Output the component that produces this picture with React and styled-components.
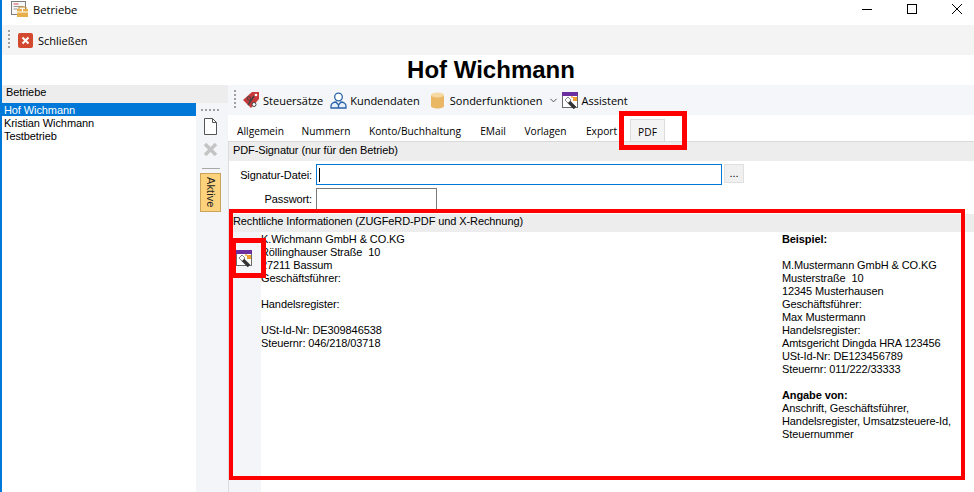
import React from 'react'
import styled, { createGlobalStyle } from 'styled-components'
import { ChevronDown } from 'lucide-react'

const GlobalStyle = createGlobalStyle`
  html, body { margin: 0; padding: 0; background: #fff; }
  * { box-sizing: border-box; }
`

const Window = styled.div`
  position: relative;
  width: 974px;
  height: 492px;
  overflow: hidden;
  background: #fff;
  border-left: 2px solid #0078d7;
  font-family: "Liberation Sans", Arial, sans-serif;
  font-size: 11px;
  letter-spacing: -0.1px;
  color: #000;
  display: flex;
  flex-direction: column;
`
const TitleBar = styled.div`
  height: 25px;
  display: flex;
  align-items: center;
  padding: 0 0 7px 8px;
  gap: 4px;
  font-family: "Open Sans", sans-serif;
  font-size: 11.2px;
  letter-spacing: 0;
`
const WindowButtons = styled.div`
  margin-left: auto;
  display: flex;
  align-items: center;
  gap: 35px;
  padding-right: 12px;
`
const Toolbar = styled.div`
  height: 30px;
  flex: none;
  display: flex;
  align-items: center;
  background: ${p => p.$tint || '#f4f4f4'};
  padding-left: 6px;
  font-family: "Open Sans", sans-serif;
  font-size: 11px;
  letter-spacing: 0;
`
const Grip = styled.span`
  width: 2px;
  height: 20px;
  margin-right: ${p => p.$after || 8}px;
  background: repeating-linear-gradient(to bottom, #a0a0a0 0 2px, transparent 2px 4px);
`
const ToolItem = styled.span`
  display: inline-flex;
  align-items: center;
  gap: ${p => p.$gap || 3}px;
  margin-right: ${p => p.$after || 4}px;
  white-space: nowrap;
`
const Heading = styled.h1`
  margin: 0;
  padding-left: 6px;
  height: 30px;
  flex: none;
  text-align: center;
  font-size: 24px;
  line-height: 30px;
  letter-spacing: 0;
  font-weight: 700;
`
const Body = styled.div`
  flex: 1;
  min-height: 0;
  display: flex;
`
const LeftPane = styled.div`
  width: 226px;
  flex: none;
  display: flex;
  flex-direction: column;
`
const PaneHeader = styled.div`
  height: 18px;
  flex: none;
  background: #ededed;
  padding-left: 4px;
  line-height: 15px;
`
const LeftBody = styled.div`
  flex: 1;
  display: flex;
`
const List = styled.ul`
  width: 194px;
  margin: 0;
  padding: 0;
  list-style: none;
`
const ListItem = styled.li`
  height: 13px;
  line-height: 14px;
  padding-left: 2px;
  background: ${p => (p.$selected ? '#0078d7' : 'transparent')};
  color: ${p => (p.$selected ? '#fff' : '#000')};
`
const Rail = styled.div`
  flex: 1;
  background: #f3f5f8;
  display: flex;
  flex-direction: column;
  align-items: center;
  padding: 6px 3px 0 0;
`
const RailDots = styled.span`
  width: 19px;
  height: 2px;
  background: repeating-linear-gradient(to right, #a0a0a0 0 2px, transparent 2px 4px);
  margin-bottom: 7px;
`
const RailSpacer = styled.span`
  height: 7px;
`
const RailRule = styled.span`
  width: 18px;
  height: 1px;
  background: #a8a8a8;
  margin: 11px 0 4px;
`
const AktiveButton = styled.div`
  width: 21px;
  height: 39px;
  background: #fdd27c;
  border: 1px solid #c9a35a;
  writing-mode: vertical-rl;
  display: flex;
  align-items: center;
  justify-content: center;
  letter-spacing: 0.1px;
  color: #222;
`
const Content = styled.div`
  flex: 1;
  min-width: 0;
  display: flex;
  flex-direction: column;
`
const Tabs = styled.div`
  height: 27px;
  flex: none;
  display: flex;
  align-items: flex-end;
  border-bottom: 1px solid #d9d9d9;
  font-family: "Open Sans", sans-serif;
  font-size: 10.2px;
  letter-spacing: 0;
`
const Tab = styled.div`
  flex: none;
  height: ${p => (p.$active ? 22 : 20)}px;
  line-height: ${p => (p.$active ? 24 : 21)}px;
  margin-left: ${p => (p.$active ? 3 : 0)}px;
  width: ${p => p.$w}px;
  text-align: center;
  background: ${p => (p.$active ? '#f4f4f4' : 'transparent')};
  border: ${p => (p.$active ? '1px solid #dcdcdc' : 'none')};
  border-bottom: none;
`
const FormArea = styled.div`
  flex: 1;
  min-height: 0;
  border-left: 1px solid #dcdcdc;
  display: flex;
  flex-direction: column;
`
const SectionHeader = styled.div`
  height: ${p => p.$h}px;
  flex: none;
  background: #ededed;
  padding-left: 4px;
  line-height: ${p => p.$h - 3}px;
`
const SignatureForm = styled.div`
  height: 53px;
  flex: none;
  padding-top: 3px;
  display: grid;
  grid-template-columns: 87px 406px 22px;
  grid-auto-rows: 24px;
  align-items: start;
`
const FieldLabel = styled.label`
  text-align: right;
  padding-right: 4px;
  line-height: 22px;
`
const PasswordLabel = styled(FieldLabel)`
  line-height: 23px;
`
const TextInput = styled.div`
  height: ${p => p.$h}px;
  width: ${p => p.$w}px;
  border: 1px solid ${p => (p.$focus ? '#0078d7' : '#7a7a7a')};
  display: flex;
  align-items: center;
  padding-left: 2px;
`
const Caret = styled.span`
  width: 1px;
  height: 14px;
  background: #000;
`
const BrowseButton = styled.div`
  width: 20px;
  height: 19px;
  margin-left: 2px;
  background: #f0f0f0;
  border: 1px solid #e0e0e0;
  text-align: center;
  line-height: 17px;
`
const LegalBody = styled.div`
  flex: 1;
  min-height: 0;
  display: flex;
`
const Gutter = styled.div`
  width: 32px;
  flex: none;
  background: #f3f5f8;
  padding: 18px 0 0 7px;
`
const AddressText = styled.div`
  width: 521px;
  flex: none;
  padding-top: 1px;
  line-height: 13px;
  white-space: pre;
`
const ExampleText = styled.div`
  padding-top: 1px;
  line-height: 13px;
  white-space: pre;
`
const Strong = styled.b`
  font-weight: 700;
`
const RedFrame = styled.div`
  position: absolute;
  left: ${p => p.$x}px;
  top: ${p => p.$y}px;
  width: ${p => p.$w}px;
  height: ${p => p.$h}px;
  border: ${p => p.$b || 5}px solid #ff0000;
  pointer-events: none;
`

const AppIcon = () => (
  <svg width="19" height="18" viewBox="0 0 19 18">
    <rect x="1.500" y="1.500" width="14" height="13" fill="#f7f7f7" stroke="#7d7d7d" />
    <path d="M3.500 4h5" stroke="#d9534f" />
    <path d="M3.500 6.500h10M3.500 9h4" stroke="#9a9a9a" />
    <rect x="7" y="9" width="11" height="8" fill="#e8b04d" />
    <path d="M7 12h11M12.500 9v3" stroke="#fff" />
    <path d="M9 9V7h7v2" fill="none" stroke="#c98f30" />
  </svg>
)
const CloseIcon = () => (
  <svg width="15" height="15" viewBox="0 0 15 15">
    <rect width="15" height="15" rx="2" fill="#d3492f" />
    <path d="M4.500 4.500l6 6M10.500 4.500l-6 6" stroke="#fff" strokeWidth="2" />
  </svg>
)
const TagIcon = () => (
  <svg width="18" height="18" viewBox="0 0 18 18">
    <path d="M10 1h7v7l-8 9-8-8z" fill="#c63a3a" />
    <circle cx="14" cy="4" r="1.300" fill="#fff" />
    <circle cx="7" cy="7.500" r="1.800" fill="none" stroke="#444" />
    <circle cx="12" cy="13.500" r="2" fill="#fff" stroke="#444" />
    <path d="M6 14l6-9" stroke="#444" strokeWidth="1.400" />
  </svg>
)
const UserIcon = () => (
  <svg width="17" height="17" viewBox="0 0 17 17" fill="none" stroke="#2a62a8" strokeWidth="1.300">
    <circle cx="8.500" cy="5" r="3.800" fill="#fff" />
    <path d="M1 16v-2c0-2.500 3-4 5-4l2.500 3 2.500-3c2 0 5 1.500 5 4v2z" fill="#e6effa" />
    <path d="M8.500 13v3" />
  </svg>
)
const DbIcon = () => (
  <svg width="15" height="17" viewBox="0 0 15 17">
    <path d="M1 3v11c0 1.500 3 2.500 6.500 2.500S14 15.500 14 14V3z" fill="#eab765" />
    <ellipse cx="7.500" cy="3" rx="6.500" ry="2.500" fill="#f6d9a2" />
  </svg>
)
const WandIcon = () => (
  <svg width="17" height="17" viewBox="0 0 17 17">
    <rect x="0.500" y="0.500" width="15" height="15" fill="#fff" stroke="#6a6a6a" />
    <rect x="0" y="0" width="16" height="4" fill="#6b2fa0" />
    <path d="M6 9l7 7" stroke="#333" strokeWidth="3.500" />
    <path d="M3 8l3-3 3 3-3 3z" fill="#fff" stroke="#888" />
    <rect x="11" y="5" width="4" height="4" fill="#f0a030" />
    <rect x="9" y="4" width="2" height="2" fill="#f7c070" />
  </svg>
)
const DocIcon = () => (
  <svg width="13" height="17" viewBox="0 0 13 17" fill="#fff" stroke="#555">
    <path d="M0.500 0.500h8l4 4v12h-12z" />
    <path d="M8.500 0.500v4h4" fill="none" />
  </svg>
)
const DisabledX = () => (
  <svg width="15" height="15" viewBox="0 0 15 15">
    <path d="M2 2l11 11M13 2L2 13" stroke="#c4c4c4" strokeWidth="3.500" />
  </svg>
)

const addressLines = `K.Wichmann GmbH & CO.KG
Röllinghauser Straße  10
27211 Bassum
Geschäftsführer:

Handelsregister:

USt-Id-Nr: DE309846538
Steuernr: 046/218/03718`

const exampleLines = `M.Mustermann GmbH & CO.KG
Musterstraße  10
12345 Musterhausen
Geschäftsführer:
Max Mustermann
Handelsregister:
Amtsgericht Dingda HRA 123456
USt-Id-Nr: DE123456789
Steuernr: 011/222/33333`

const tabs = [
  ['Allgemein', 65], ['Nummern', 66], ['Konto/Buchhaltung', 112], ['EMail', 44],
  ['Vorlagen', 61], ['Export', 51],
]

export default function App() {
  return (
    <Window>
      <GlobalStyle />
      <TitleBar>
        <AppIcon />
        Betriebe
        <WindowButtons>
          <svg width="10" height="10" viewBox="0 0 10 10"><path d="M0 5.500h10" stroke="#000" /></svg>
          <svg width="10" height="10" viewBox="0 0 10 10"><rect x=".5" y=".5" width="9" height="9" fill="none" stroke="#000" /></svg>
          <svg width="10" height="10" viewBox="0 0 10 10"><path d="M0 0l10 10M10 0L0 10" stroke="#000" /></svg>
        </WindowButtons>
      </TitleBar>
      <Toolbar>
        <Grip />
        <ToolItem $gap={5}><CloseIcon />Schließen</ToolItem>
      </Toolbar>
      <Heading>Hof Wichmann</Heading>
      <Body>
        <LeftPane>
          <PaneHeader>Betriebe</PaneHeader>
          <LeftBody>
            <List>
              <ListItem $selected>Hof Wichmann</ListItem>
              <ListItem>Kristian Wichmann</ListItem>
              <ListItem>Testbetrieb</ListItem>
            </List>
            <Rail>
              <RailDots />
              <DocIcon />
              <RailSpacer />
              <DisabledX />
              <RailRule />
              <AktiveButton>Aktive</AktiveButton>
            </Rail>
          </LeftBody>
        </LeftPane>
        <Content>
          <Toolbar $tint="#f4f6f9">
            <Grip $after={6} />
            <ToolItem $after={7}><TagIcon />Steuersätze</ToolItem>
            <ToolItem $after={10}><UserIcon />Kundendaten</ToolItem>
            <ToolItem $after={3} $gap={5}><DbIcon />Sonderfunktionen<ChevronDown size={11} color="#444" /></ToolItem>
            <ToolItem><WandIcon />Assistent</ToolItem>
          </Toolbar>
          <Tabs>
            {tabs.map(([label, w]) => <Tab key={label} $w={w}>{label}</Tab>)}
            <Tab $active $w={35}>PDF</Tab>
          </Tabs>
          <FormArea>
            <SectionHeader $h={19}>PDF-Signatur (nur für den Betrieb)</SectionHeader>
            <SignatureForm>
              <FieldLabel>Signatur-Datei:</FieldLabel>
              <TextInput $w={406} $h={21} $focus><Caret /></TextInput>
              <BrowseButton>...</BrowseButton>
              <PasswordLabel>Passwort:</PasswordLabel>
              <TextInput $w={121} $h={24} />
            </SignatureForm>
            <SectionHeader $h={18}>Rechtliche Informationen (ZUGFeRD-PDF und X-Rechnung)</SectionHeader>
            <LegalBody>
              <Gutter><WandIcon /></Gutter>
              <AddressText>{addressLines}</AddressText>
              <ExampleText>
                <Strong>Beispiel:</Strong>{'\n\n'}
                {exampleLines}{'\n\n'}
                <Strong>Angabe von:</Strong>{'\n'}
                {'Anschrift, Geschäftsführer,\nHandelsregister, Umsatzsteuere-Id,\nSteuernummer'}
              </ExampleText>
            </LegalBody>
          </FormArea>
        </Content>
      </Body>
      <RedFrame $x={617} $y={111} $w={68} $h={39} />
      <RedFrame $x={227} $y={209} $w={736} $h={271} $b={4} />
      <RedFrame $x={229} $y={238} $w={35} $h={40} />
    </Window>
  )
}
